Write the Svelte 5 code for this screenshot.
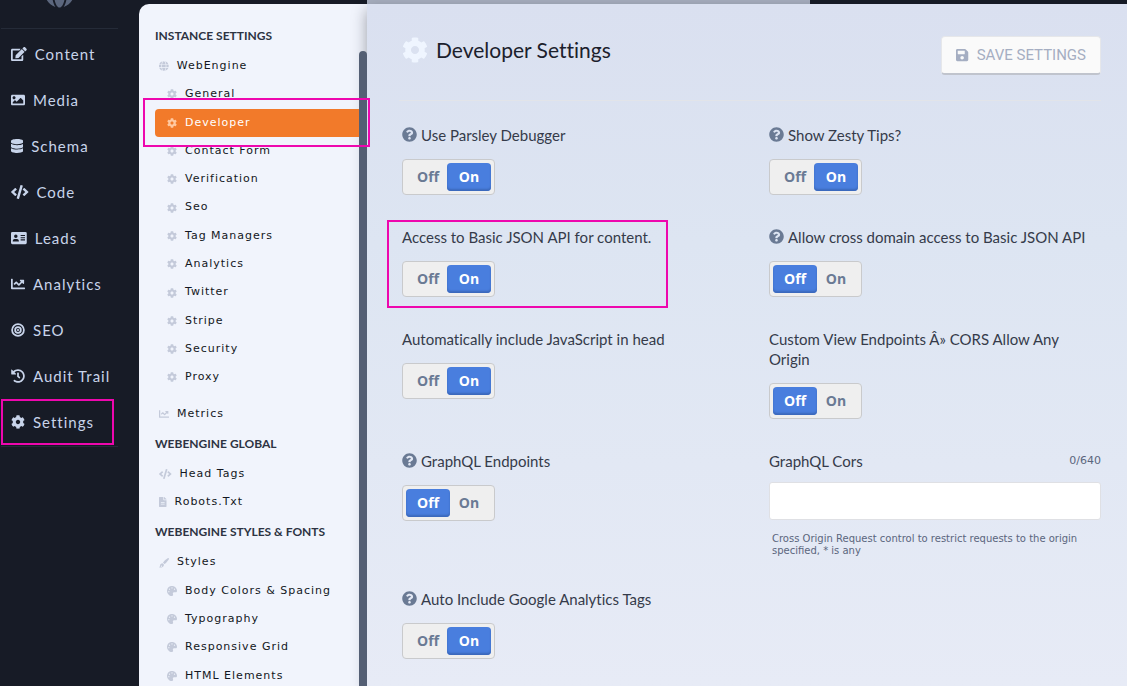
<script>
  const icons = {
    cog: { w: 512, d: 'M487.4 315.7l-42.6-24.6c4.3-23.2 4.3-47 0-70.2l42.6-24.6c4.9-2.8 7.1-8.6 5.5-14-11.1-35.6-30-67.8-54.7-94.6-3.8-4.1-10-5.1-14.8-2.3L380.8 110c-17.9-15.4-38.5-27.3-60.8-35.1V25.8c0-5.6-3.9-10.5-9.4-11.7-36.7-8.2-74.3-7.8-109.2 0-5.5 1.2-9.4 6.1-9.4 11.7V75c-22.2 7.9-42.8 19.8-60.8 35.1L88.7 85.5c-4.9-2.8-11-1.9-14.8 2.3-24.7 26.7-43.6 58.9-54.7 94.6-1.7 5.4.6 11.2 5.5 14L67.3 221c-4.3 23.2-4.3 47 0 70.2l-42.6 24.6c-4.9 2.8-7.1 8.6-5.5 14 11.1 35.6 30 67.8 54.7 94.6 3.8 4.1 10 5.1 14.8 2.3l42.6-24.6c17.9 15.4 38.5 27.3 60.8 35.1v49.2c0 5.6 3.9 10.5 9.4 11.7 36.7 8.2 74.3 7.8 109.2 0 5.5-1.2 9.4-6.1 9.4-11.7v-49.2c22.2-7.9 42.8-19.8 60.8-35.1l42.6 24.6c4.9 2.8 11 1.9 14.8-2.3 24.7-26.7 43.6-58.9 54.7-94.6 1.5-5.5-.7-11.3-5.6-14.1zM256 336c-44.1 0-80-35.9-80-80s35.9-80 80-80 80 35.9 80 80-35.9 80-80 80z' },
    edit: { w: 576, d: 'M402.6 83.2l90.2 90.2c3.8 3.8 3.8 10 0 13.8L274.4 405.6l-92.8 10.3c-12.4 1.4-22.9-9.1-21.5-21.5l10.3-92.8L388.8 83.2c3.8-3.8 10-3.8 13.8 0zm162-22.9l-48.8-48.8c-15.2-15.2-39.9-15.2-55.2 0l-35.4 35.4c-3.8 3.8-3.8 10 0 13.8l90.2 90.2c3.8 3.8 10 3.8 13.8 0l35.4-35.4c15.2-15.3 15.2-40 0-55.2zM384 346.2V448H64V128h229.8c3.2 0 6.2-1.3 8.5-3.5l40-40c7.6-7.6 2.2-20.5-8.5-20.5H48C21.5 64 0 85.5 0 112v352c0 26.5 21.5 48 48 48h352c26.5 0 48-21.5 48-48V306.2c0-10.7-12.9-16-20.5-8.5l-40 40c-2.2 2.3-3.5 5.3-3.5 8.5z' },
    image: { w: 512, d: 'M464 448H48c-26.51 0-48-21.49-48-48V112c0-26.51 21.49-48 48-48h416c26.51 0 48 21.49 48 48v288c0 26.51-21.49 48-48 48zM112 120c-30.928 0-56 25.072-56 56s25.072 56 56 56 56-25.072 56-56-25.072-56-56-56zM64 384h384V272l-87.515-87.515c-4.686-4.686-12.284-4.686-16.971 0L208 320l-55.515-55.515c-4.686-4.686-12.284-4.686-16.971 0L64 336v48z' },
    database: { w: 448, d: 'M448 73.143v45.714C448 159.143 347.667 192 224 192S0 159.143 0 118.857V73.143C0 32.857 100.333 0 224 0s224 32.857 224 73.143zM448 176v102.857C448 319.143 347.667 352 224 352S0 319.143 0 278.857V176c48.125 33.143 136.208 48.572 224 48.572S399.874 209.143 448 176zm0 160v102.857C448 479.143 347.667 512 224 512S0 479.143 0 438.857V336c48.125 33.143 136.208 48.572 224 48.572S399.874 369.143 448 336z' },
    code: { w: 640, d: 'M278.9 511.5l-61-17.7c-6.4-1.8-10-8.5-8.2-14.9L346.2 8.7c1.8-6.4 8.5-10 14.9-8.2l61 17.7c6.4 1.8 10 8.5 8.2 14.9L293.8 503.3c-1.9 6.4-8.5 10.1-14.9 8.2zm-114-112.2l43.5-46.4c4.6-4.9 4.3-12.7-.8-17.2L117 256l90.6-79.7c5.1-4.5 5.5-12.3.8-17.2l-43.5-46.4c-4.5-4.8-12.1-5.1-17-.5L3.8 247.2c-5.1 4.7-5.1 12.8 0 17.5l144.1 135.1c4.9 4.6 12.5 4.4 17-.5zm327.2.6l144.1-135.1c5.1-4.7 5.1-12.8 0-17.5L492.1 112.1c-4.8-4.5-12.4-4.3-17 .5L431.6 159c-4.6 4.9-4.3 12.7.8 17.2L523 256l-90.6 79.7c-5.1 4.5-5.5 12.3-.8 17.2l43.5 46.4c4.5 4.9 12.1 5.1 17 .6z' },
    card: { w: 576, d: 'M48 32h480a48 48 0 0 1 48 48v352a48 48 0 0 1-48 48H48a48 48 0 0 1-48-48V80a48 48 0 0 1 48-48zM176 128a64 64 0 1 0 0 128 64 64 0 1 0 0-128zM64 364v20h224v-20c0-44-34-76-68-76h-88c-34 0-68 32-68 76zM352 144v40h160v-40zM352 224v40h160v-40zM352 304v40h160v-40z' },
    chart: { w: 512, d: 'M496 384H64V80c0-8.84-7.16-16-16-16H16C7.16 64 0 71.16 0 80v336c0 17.67 14.33 32 32 32h464c8.84 0 16-7.16 16-16v-32c0-8.84-7.16-16-16-16zM464 96H345.94c-21.38 0-32.09 25.85-16.97 40.97l32.4 32.4L288 242.75l-73.37-73.37c-12.5-12.5-32.76-12.5-45.25 0l-68.69 68.69c-6.25 6.25-6.25 16.38 0 22.63l22.62 22.62c6.25 6.25 16.38 6.25 22.63 0L192 237.25l73.37 73.37c12.5 12.5 32.76 12.5 45.25 0l96-96 32.4 32.4c15.12 15.12 40.97 4.41 40.97-16.97V112c.01-8.84-7.15-16-15.99-16z' },
    bullseye: { w: 512, d: 'M256 8a248 248 0 1 0 0 496 248 248 0 1 0 0-496zM256 72a184 184 0 1 1 0 368 184 184 0 1 1 0-368zM256 120a136 136 0 1 0 0 272 136 136 0 1 0 0-272zM256 184a72 72 0 1 1 0 144 72 72 0 1 1 0-144zM256 216a40 40 0 1 0 0 80 40 40 0 1 0 0-80z' },
    history: { w: 512, d: 'M504 255.531c.253 136.64-111.18 248.372-247.82 248.468-59.015.042-113.223-20.53-155.822-54.911-11.077-8.94-11.905-25.541-1.839-35.607l11.267-11.267c8.609-8.609 22.353-9.551 31.891-1.984C173.062 425.135 212.781 440 256 440c101.705 0 184-82.311 184-184 0-101.705-82.311-184-184-184-48.814 0-93.149 18.969-126.068 49.932l50.754 50.754c10.08 10.08 2.941 27.314-11.313 27.314H24c-8.837 0-16-7.163-16-16V38.627c0-14.254 17.234-21.393 27.314-11.314l49.372 49.372C129.209 34.136 189.552 8 256 8c136.81 0 247.747 110.78 248 247.531zm-180.912 78.784l9.823-12.63c8.138-10.463 6.253-25.542-4.21-33.679L288 256.349V152c0-13.255-10.745-24-24-24h-16c-13.255 0-24 10.745-24 24v135.651l65.409 50.874c10.463 8.137 25.541 6.253 33.679-4.21z' },
    help: { w: 512, d: 'M504 256c0 136.997-111.043 248-248 248S8 392.997 8 256C8 119.083 119.043 8 256 8s248 111.083 248 248zM262.655 90c-54.497 0-89.255 22.957-116.549 63.758-3.536 5.286-2.353 12.415 2.715 16.258l34.699 26.31c5.205 3.947 12.621 3.008 16.665-2.122 17.864-22.658 30.113-35.797 57.303-35.797 20.429 0 45.698 13.148 45.698 32.958 0 14.976-12.363 22.667-32.534 33.976C247.128 238.528 216 254.941 216 296v4c0 6.627 5.373 12 12 12h56c6.627 0 12-5.373 12-12v-1.333c0-28.462 83.186-29.647 83.186-106.667 0-58.002-60.165-102-116.531-102zM256 338c-25.365 0-46 20.635-46 46 0 25.364 20.635 46 46 46s46-20.636 46-46c0-25.365-20.635-46-46-46z' },
    save: { w: 448, d: 'M433.941 129.941l-83.882-83.882A48 48 0 0 0 316.118 32H48C21.49 32 0 53.49 0 80v352c0 26.51 21.49 48 48 48h352c26.51 0 48-21.49 48-48V163.882a48 48 0 0 0-14.059-33.941zM224 416c-35.346 0-64-28.654-64-64 0-35.346 28.654-64 64-64s64 28.654 64 64c0 35.346-28.654 64-64 64zm96-304.52V212c0 6.627-5.373 12-12 12H76c-6.627 0-12-5.373-12-12V108c0-6.627 5.373-12 12-12h228.52c3.183 0 6.235 1.264 8.485 3.515l3.48 3.48A11.996 11.996 0 0 1 320 111.48z' },
    globe: { w: 496, d: 'M336.5 160C322 70.7 287.8 8 248 8s-74 62.7-88.5 152h177zM152 256c0 22.2 1.2 43.5 3.3 64h185.3c2.1-20.5 3.3-41.8 3.3-64s-1.2-43.5-3.3-64H155.3c-2.1 20.5-3.3 41.8-3.3 64zm324.7-96c-28.6-67.9-86.5-120.4-158-141.6 24.4 33.8 41.2 84.7 50 141.6h108zM177.2 18.4C105.8 39.6 47.8 92.1 19.3 160h108c8.7-56.9 25.5-107.8 49.9-141.6zM487.4 192H372.7c2.1 21 3.3 42.5 3.3 64s-1.2 43-3.3 64h114.6c5.5-20.5 8.6-41.8 8.6-64s-3.1-43.5-8.5-64zM120 256c0-21.5 1.2-43 3.3-64H8.6C3.2 212.5 0 233.8 0 256s3.2 43.5 8.6 64h114.6c-2-21-3.2-42.5-3.2-64zm39.5 96c14.5 89.3 48.7 152 88.5 152s74-62.7 88.5-152h-177zm159.3 141.6c71.4-21.2 129.4-73.7 158-141.6h-108c-8.8 56.9-25.6 107.8-50 141.6zM19.3 352c28.6 67.9 86.5 120.4 158 141.6-24.4-33.8-41.2-84.7-50-141.6h-108z' },
    palette: { w: 512, d: 'M204.3 5C104.9 24.4 24.8 104.3 5.2 203.4c-37 187 131.7 326.4 258.8 306.7 41.2-6.4 61.4-54.6 42.5-91.7-23.1-45.4 9.9-98.4 60.9-98.4h79.7c35.8 0 64.8-29.6 64.9-65.3C511.5 97.1 368.1-26.9 204.3 5zM96 320c-17.7 0-32-14.3-32-32s14.3-32 32-32 32 14.3 32 32-14.3 32-32 32zm32-128c-17.7 0-32-14.3-32-32s14.3-32 32-32 32 14.3 32 32-14.3 32-32 32zm128-64c-17.7 0-32-14.3-32-32s14.3-32 32-32 32 14.3 32 32-14.3 32-32 32zm128 64c-17.7 0-32-14.3-32-32s14.3-32 32-32 32 14.3 32 32-14.3 32-32 32z' },
    file: { w: 384, d: 'M224 136V0H24C10.7 0 0 10.7 0 24v464c0 13.3 10.7 24 24 24h336c13.3 0 24-10.7 24-24V160H248c-13.2 0-24-10.8-24-24zM288 344v40H96v-40zM288 256v40H96v-40zM384 121.9v6.1H256V0h6.1c6.4 0 12.5 2.5 17 7l97.9 98c4.5 4.5 7 10.6 7 16.9z' },
    brush: { w: 512, d: 'M460 6c28-16 62 14 48 46-22 50-104 160-168 218-22 20-44 32-66 34l-66-58c2-22 12-42 30-60C300 128 408 36 460 6zM176 272l74 64c2 20 0 42-8 62-34 84-148 112-242 70 44-10 46-34 52-82 8-66 62-114 124-114zM126 386a32 32 0 1 0 0 64 32 32 0 1 0 0-64z' }
  };

  const nav = [
    ['Content', 'edit'], ['Media', 'image'], ['Schema', 'database'], ['Code', 'code'], ['Leads', 'card'],
    ['Analytics', 'chart'], ['SEO', 'bullseye'], ['Audit Trail', 'history'], ['Settings', 'cog']
  ];

  const groups = [
    {
      title: 'Instance Settings',
      items: [
        { label: 'WebEngine', icon: 'globe', children: ['General', 'Developer', 'Contact Form', 'Verification', 'Seo', 'Tag Managers', 'Analytics', 'Twitter', 'Stripe', 'Security', 'Proxy'], childIcon: 'cog' },
        { label: 'Metrics', icon: 'chart' }
      ]
    },
    { title: 'WebEngine Global', items: [{ label: 'Head Tags', icon: 'code' }, { label: 'Robots.Txt', icon: 'file' }] },
    {
      title: 'WebEngine Styles & Fonts',
      items: [{ label: 'Styles', icon: 'brush', children: ['Body Colors & Spacing', 'Typography', 'Responsive Grid', 'HTML Elements'], childIcon: 'palette' }]
    }
  ];

  let fields = $state([
    { label: 'Use Parsley Debugger', help: true, on: true },
    { label: 'Show Zesty Tips?', help: true, on: true },
    { label: 'Access to Basic JSON API for content.', on: true, marked: true },
    { label: 'Allow cross domain access to Basic JSON API', help: true, on: false },
    { label: 'Automatically include JavaScript in head', on: true },
    { label: 'Custom View Endpoints Â» CORS Allow Any Origin', on: false },
    { label: 'GraphQL Endpoints', help: true, on: false },
    { label: 'GraphQL Cors', text: true },
    { label: 'Auto Include Google Analytics Tags', help: true, on: true }
  ]);
  let cors = $state('');
</script>

{#snippet icon(name)}
  <svg class="icon" viewBox="0 0 {icons[name].w} 512" aria-hidden="true"><path fill-rule="evenodd" d={icons[name].d} /></svg>
{/snippet}

<div class="app">
  <nav class="sidebar" aria-label="Main">
    <div class="brand">{@render icon('globe')}</div>
    <ul class="nav">
      {#each nav as [label, name]}
        <li class:marked={label === 'Settings'}><a href="#{name}">{@render icon(name)}<span>{label}</span></a></li>
      {/each}
    </ul>
  </nav>

  <aside class="panel">
    <div class="menu">
      {#each groups as group}
        <section>
          <h2>{group.title}</h2>
          <ul>
            {#each group.items as item}
              <li>
                <a class="row" href="#{item.icon}">{@render icon(item.icon)}<span>{item.label}</span></a>
                {#if item.children}
                  <ul class="sub">
                    {#each item.children as child}
                      <li class:marked={child === 'Developer'}>
                        <a class="row" class:active={child === 'Developer'} href="#{item.childIcon}">{@render icon(item.childIcon)}<span>{child}</span></a>
                      </li>
                    {/each}
                  </ul>
                {/if}
              </li>
            {/each}
          </ul>
        </section>
      {/each}
    </div>
    <div class="track"><div class="thumb"></div></div>
  </aside>

  <div class="stage">
    <div class="progress"></div>
    <main>
      <header>
        <h1>{@render icon('cog')}<span>Developer Settings</span></h1>
        <button class="save" type="button">{@render icon('save')}<span>SAVE SETTINGS</span></button>
      </header>
      <form class="fields">
        {#each fields as field, i}
          <div class="field" class:marked={field.marked}>
            {#if field.text}
              <div class="label split"><label for="f{i}">{field.label}</label><small>{cors.length}/640</small></div>
              <input id="f{i}" type="text" maxlength="640" bind:value={cors} />
              <p>Cross Origin Request control to restrict requests to the origin specified, * is any</p>
            {:else}
              <div class="label" id="f{i}">{#if field.help}{@render icon('help')}{/if}<span>{field.label}</span></div>
              <div class="toggle" role="group" aria-labelledby="f{i}">
                <button type="button" class:on={!field.on} aria-pressed={!field.on} onclick={() => (field.on = false)}>Off</button>
                <button type="button" class:on={field.on} aria-pressed={field.on} onclick={() => (field.on = true)}>On</button>
              </div>
            {/if}
          </div>
        {/each}
      </form>
    </main>
  </div>
</div>

<style>
  :global(body) { background: #171b26; }
  .app {
    display: flex;
    height: 100vh;
    overflow: hidden;
    font-family: Lato, "Open Sans", sans-serif;
    font-variant-ligatures: none;
    color: #1b202c;
  }
  ul { list-style: none; margin: 0; padding: 0; }
  h1, h2, p { margin: 0; }
  a { color: inherit; text-decoration: none; }
  .icon { display: block; flex: none; height: 1em; fill: currentColor; }

  /* Pink callout frames */
  .marked { position: relative; }
  .marked::after {
    content: "";
    position: absolute;
    z-index: 5;
    border: 2px solid #ee07ae;
    pointer-events: none;
  }

  .sidebar { flex: none; width: 139px; color: #c8d4ea; }
  .brand {
    display: flex;
    justify-content: center;
    align-items: flex-end;
    height: 28px;
    margin: 0 21px 0 1px;
    border-bottom: 1px solid #252b38;
    color: #5b667d;
    font-size: 30px;
  }
  .brand .icon { margin-bottom: 20px; }
  .nav { margin: 0 21px 0 1px; padding: 2px 0 1px; border-bottom: 1px solid #252b38; }
  .nav a {
    display: flex;
    align-items: center;
    gap: 8px;
    height: 46px;
    padding-left: 10px;
    font-size: 15px;
    letter-spacing: 1px;
  }
  .nav .icon { font-size: 14px; }
  .nav .marked::after { inset: 0 4px 0 0; }

  .panel {
    display: flex;
    flex: none;
    width: 228px;
    margin-top: 4px;
    background: #f1f4fc;
    border-radius: 10px 0 0 0;
  }
  .menu { flex: 1; padding: 16px 0 0 16px; }
  h2 {
    padding: 6px 0;
    font: 700 12px/20px Lato, sans-serif;
    color: #2d3342;
    text-transform: uppercase;
    white-space: nowrap;
  }
  .row {
    display: flex;
    align-items: center;
    gap: 8px;
    padding: 7px 0 7px 4px;
    font: 11px/1.3 "DejaVu Sans", sans-serif;
    letter-spacing: 1px;
    color: #131722;
    white-space: nowrap;
  }
  .row .icon { font-size: 10px; color: #c4cada; }
  .sub { padding-bottom: 8px; }
  .sub .row { padding-left: 12px; }
  .sub .row.active { background: #f27a2a; border-radius: 4px 0 0 4px; color: #fff; }
  .row.active .icon { color: #ffc9a1; }
  .sub .marked::after { inset: -11px -11px -10px -12px; }
  .track { z-index: 2; width: 8px; padding-top: 47px; }
  .thumb { height: 100%; background: #545f74; border-radius: 4px 4px 0 0; }

  .stage { flex: 1; display: flex; flex-direction: column; min-width: 0; }
  .progress { flex: none; width: 443px; max-width: 100%; height: 4px; background: #a7aebe; }
  main {
    flex: 1;
    padding: 0 26px 0 35px;
    background: linear-gradient(#dae0f0, #dde5f2 35%, #e7ebf6);
    box-shadow: 0 6px 14px rgba(24, 28, 40, 0.4);
  }
  header {
    display: flex;
    justify-content: space-between;
    align-items: flex-start;
    height: 64px;
    margin-left: -3px;
    padding: 32px 0 0 3px;
    border-bottom: 1px solid #e2e4e9;
  }
  h1 { display: flex; align-items: center; gap: 8px; font-size: 21px; line-height: 28px; font-weight: 400; }
  h1 .icon { font-size: 26px; color: #eff5ff; }
  .save {
    display: flex;
    align-items: center;
    gap: 8px;
    height: 39px;
    padding: 0 14px;
    border: 1px solid #e6e7ea;
    border-bottom: 2px solid #c0c4cd;
    border-radius: 4px;
    background: #fafafa;
    color: #a5aec2;
    font: 15px/20px Roboto, sans-serif;
  }
  .save .icon { font-size: 14px; }

  .fields { display: grid; grid-template-columns: 1fr 1fr; gap: 32px 35px; padding-top: 24px; }
  .label { display: flex; align-items: flex-start; gap: 4px; margin-bottom: 14px; font-size: 15px; line-height: 20px; color: #353b4a; }
  .label .icon { margin-top: 2px; font-size: 15px; color: #6a7a94; }
  .split { justify-content: space-between; margin-bottom: 11px; }
  small { font: 11px/20px "DejaVu Sans", sans-serif; color: #5b667d; }
  .field.marked::after { inset: -7px 66px -11px -15px; }
  .toggle { display: inline-flex; padding: 3px; border: 1px solid #c9cacc; border-radius: 4px; background: #efefef; vertical-align: top; }
  .toggle button {
    width: 44px;
    height: 28px;
    padding: 0;
    border: 0;
    border-radius: 4px;
    background: none;
    color: #6a7a94;
    font: 700 14px/28px "Open Sans", sans-serif;
  }
  .toggle button + button { margin-left: -3px; }
  .toggle .on { background: #497ede; box-shadow: inset 0 -2px 2px #3c69bb; color: #fff; }
  input {
    display: block;
    box-sizing: border-box;
    width: 100%;
    height: 38px;
    padding: 0 10px;
    border: 1px solid #dfe0e4;
    border-radius: 3px;
    background: #fff;
    font: 14px Lato, sans-serif;
  }
  p { margin-top: 13px; padding: 0 3px; font: 10px/12px "DejaVu Sans", sans-serif; color: #5b667d; }
</style>
